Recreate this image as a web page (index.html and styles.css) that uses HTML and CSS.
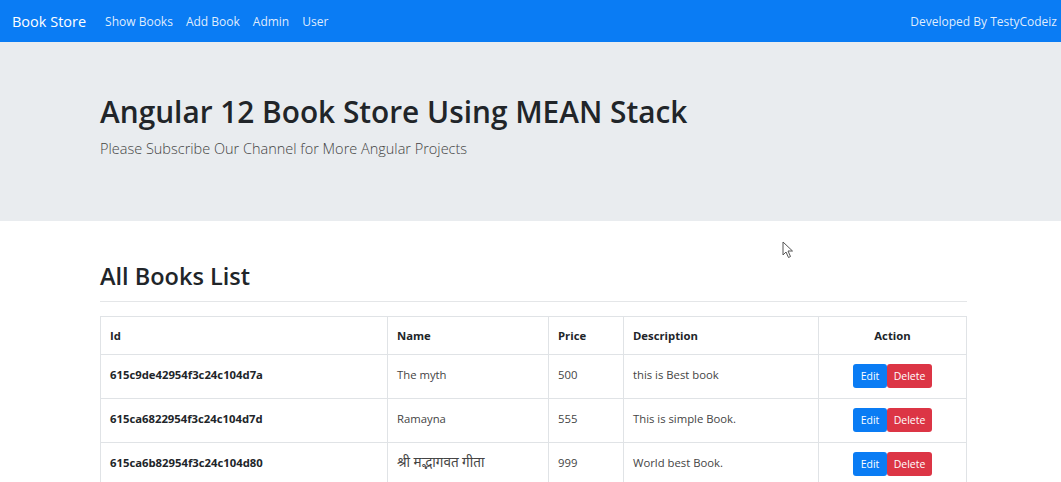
FILE: index.html
```html
<!DOCTYPE html>
<html>
<head>
<meta charset="utf-8">
<title>Book Store</title>
<link rel="stylesheet" href="styles.css">
</head>
<body>
<nav class="navbar">
  <div class="nav-left">
    <a class="brand" href="#">Book Store</a>
    <a class="nav-link" href="#">Show Books</a>
    <a class="nav-link" href="#">Add Book</a>
    <a class="nav-link" href="#">Admin</a>
    <a class="nav-link" href="#">User</a>
  </div>
  <span class="nav-right">Developed By TestyCodeiz</span>
</nav>
<header class="jumbotron">
  <h1 class="title">Angular 12 Book Store Using MEAN Stack</h1>
  <p class="lead">Please Subscribe Our Channel for More Angular Projects</p>
</header>
<main class="content">
  <h2 class="section-title">All Books List</h2>
  <hr class="divider">
  <table class="books">
    <thead>
      <tr>
        <th class="col-id">Id</th>
        <th class="col-name">Name</th>
        <th class="col-price">Price</th>
        <th class="col-desc">Description</th>
        <th class="col-action">Action</th>
      </tr>
    </thead>
    <tbody>
      <tr>
        <td class="id">615c9de42954f3c24c104d7a</td>
        <td>The myth</td>
        <td>500</td>
        <td>this is Best book</td>
        <td class="actions"><button class="btn edit">Edit</button><button class="btn delete">Delete</button></td>
      </tr>
      <tr>
        <td class="id">615ca6822954f3c24c104d7d</td>
        <td>Ramayna</td>
        <td>555</td>
        <td>This is simple Book.</td>
        <td class="actions"><button class="btn edit">Edit</button><button class="btn delete">Delete</button></td>
      </tr>
      <tr>
        <td class="id">615ca6b82954f3c24c104d80</td>
        <td class="deva">श्री मद्भागवत गीता</td>
        <td>999</td>
        <td>World best Book.</td>
        <td class="actions"><button class="btn edit">Edit</button><button class="btn delete">Delete</button></td>
      </tr>
    </tbody>
  </table>
</main>
<svg class="cursor" width="12" height="18" viewBox="0 0 12 18"><path d="M1 1 L1 14 L4 11 L6.5 16.5 L8.5 15.5 L6 10 L10.5 10 Z" fill="#fff" stroke="#555" stroke-width="1"/></svg>
</body>
</html>
```
FILE: styles.css
```css
* { box-sizing: border-box; }
html, body { margin: 0; padding: 0; }
body {
  font-family: "Open Sans", "Noto Sans", "Noto Sans Devanagari", sans-serif;
  color: #212529;
  background: #fff;
  width: 1061px;
  height: 482px;
  overflow: hidden;
  position: relative;
}
.navbar {
  height: 42px;
  background: #0a7cf4;
  display: flex;
  align-items: center;
  justify-content: space-between;
  padding: 0 4px 0 12px;
}
.nav-left { display: flex; align-items: center; }
.brand {
  color: #fff;
  text-decoration: none;
  font-size: 14.5px;
  margin-right: 19px;
}
.nav-link {
  color: rgba(255,255,255,0.88);
  text-decoration: none;
  font-size: 12px;
  margin-right: 13px;
}
.nav-right {
  color: rgba(255,255,255,0.88);
  font-size: 12px;
}
.jumbotron {
  background: #e9ecef;
  height: 179px;
  padding: 52px 0 0 100px;
}
.title {
  margin: 0;
  font-weight: 600;
  font-size: 29.8px;
  line-height: 36px;
  color: #212529;
}
.lead {
  margin: 9px 0 0;
  font-size: 14.5px;
  font-weight: 300;
  color: #444;
}
.content {
  padding: 38px 94px 0 100px;
}
.section-title {
  margin: 0;
  font-size: 23.5px;
  font-weight: 600;
  line-height: 34px;
}
.divider {
  border: 0;
  border-top: 1px solid #e4e6e8;
  margin: 8px 0 14px;
}
.books {
  width: 867px;
  border-collapse: collapse;
  font-size: 11.3px;
  color: #444;
}
.books th, .books td {
  border: 1px solid #e0e3e6;
  padding: 9px 9px;
  text-align: left;
  vertical-align: middle;
}
.books th {
  font-weight: 700;
  color: #212529;
  height: 38px;
}
.books td {
  height: 44px;
  vertical-align: top;
  padding-top: 11px;
  line-height: 18px;
}
.books td.deva {
  font-size: 13.5px;
  padding-top: 10px;
}
.col-id { width: 287px; }
.col-name { width: 161px; }
.col-price { width: 75px; }
.col-desc { width: 195px; }
.books th.col-action { text-align: center; }
.books td.id { font-weight: 700; color: #212529; }
.books td.actions {
  text-align: center;
  padding: 9px 0 0;
  line-height: 24px;
}
.btn {
  font-family: inherit;
  font-size: 10.5px;
  color: #fff;
  border: 0;
  height: 24px;
  border-radius: 3px;
  padding: 0 6px;
  vertical-align: top;
}
.edit { background: #0a7cf4; width: 34px; }
.delete { background: #dc3545; width: 45px; }
.cursor {
  position: absolute;
  left: 782px;
  top: 241px;
}
```
